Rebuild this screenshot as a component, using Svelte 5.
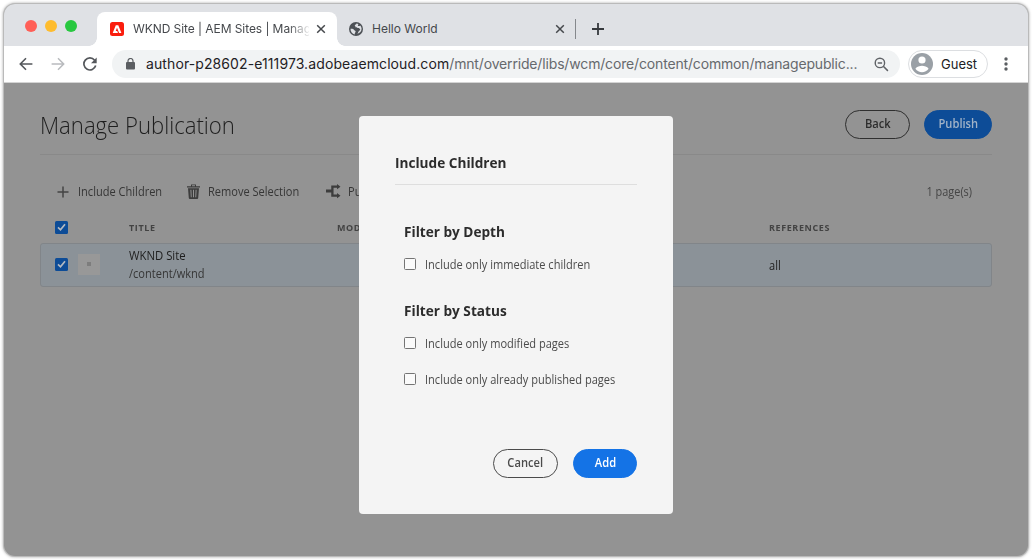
<script>
  let immediate = $state(false);
  let modified = $state(false);
  let published = $state(false);
</script>

{#snippet cross()}
  <svg class="cross" width="10" height="10" viewBox="0 0 10 10"><path d="M1.2 1.2 8.8 8.8M8.8 1.2 1.2 8.8" stroke="#45484c" stroke-width="1.5" fill="none" /></svg>
{/snippet}

{#snippet checked()}
  <svg class="checked" width="13" height="13" viewBox="0 0 13 13"><rect width="13" height="13" rx="1.5" fill="#0d4c97" /><path d="M3 6.4 5.500 8.800 10 3.2" fill="none" stroke="#b4bac1" stroke-width="1.7" /></svg>
{/snippet}

<div class="window">
  <div class="tabs">
    <div class="lights"><i class="red"></i><i class="yellow"></i><i class="green"></i></div>
    <div class="tab active">
      <svg width="14" height="14" viewBox="0 0 14 14"><rect width="14" height="14" rx="2.5" fill="#fa1e0e" /><path d="M2.7 11 5.8 3.3h2.5L11.4 11H9.1L7 5.8 5.7 9h1.5l.8 2z" fill="#fff" /></svg>
      <span class="name fade">WKND Site | AEM Sites | Manag</span>
      {@render cross()}
    </div>
    <div class="tab">
      <svg width="14" height="14" viewBox="0 0 14 14"><circle cx="7" cy="7" r="7" fill="#4d5156" /><path d="M1.5 6.7c1.7-.1 3.2.2 3.7 1.3.4.9 1.6.6 1.4 1.7-.1.8-1 .9-.9 2.7-2.4-.5-4.3-2.8-4.2-5.7zM7.5 1.5c-.2 1.1-1.6 1-1.7 2-.1.8 1 .7.8 1.500-.1.7 1.7.5 2.3 1.1.7.8 2.1.2 2.3 1.1.2.8-.9 1.4-1.6 2.2-.5.6-.4 1.3-1.2 2.3 2.4-.5 4.2-2.3 4.2-4.9 0-1.2-.6-2.5-1.4-3.3-.7.7-2 .9-2.3.1-.2-.5.2-.9.7-1.4-.7-.5-1.4-.7-2.1-.7z" fill="#dfe1e5" /></svg>
      <span class="name">Hello World</span>
      {@render cross()}
    </div>
    <div class="sep"></div>
    <svg class="new" width="12" height="12" viewBox="0 0 12 12"><path d="M6 0v12M0 6h12" stroke="#36393d" stroke-width="1.8" /></svg>
  </div>

  <div class="toolbar">
    <svg class="back" width="14" height="14" viewBox="0 0 14 14"><path d="M13.4 7H1.3M7 1.3 1.3 7 7 12.7" fill="none" stroke="#54575b" stroke-width="1.6" /></svg>
    <svg class="forward" width="14" height="14" viewBox="0 0 14 14"><path d="M.6 7h12.1M7 1.3 12.7 7 7 12.7" fill="none" stroke="#b9bbbe" stroke-width="1.5" /></svg>
    <svg class="reload" width="14" height="14" viewBox="0 0 14 14"><path d="M12.7 8.6A6 6 0 1 1 11.6 3.2" fill="none" stroke="#54575b" stroke-width="1.7" /><path d="M13.7.6v5.7H8z" fill="#54575b" /></svg>
    <div class="address">
      <svg width="9" height="12" viewBox="0 0 9 12"><rect y="4" width="9" height="7.5" rx="1" fill="#5b5e62" /><path d="M2 5V3a2.5 2.5 0 0 1 5 0v2" fill="none" stroke="#5b5e62" stroke-width="1.2" /></svg>
      <span class="url"><b>author-p28602-e111973.adobeaemcloud.com</b>/mnt/override/libs/wcm/core/content/common/managepublic...</span>
      <svg class="zoom" width="15" height="15" viewBox="0 0 15 15"><circle cx="5.9" cy="5.9" r="4.7" fill="none" stroke="#606367" stroke-width="1.4" /><path d="M3.7 5.9h4.4M9.3 9.3l4.6 4.6" stroke="#606367" stroke-width="1.5" /></svg>
    </div>
    <div class="guest">
      <svg width="22" height="22" viewBox="0 0 22 22"><circle cx="11" cy="11" r="11" fill="#9aa0a6" /><circle cx="11" cy="7" r="3.6" fill="#fff" /><path d="M4.4 15.7C5.8 13.7 8.8 12.8 11 12.8s5.2.9 6.6 2.9C16 18 13.600 19.200 11 19.200S6 18 4.400 15.700z" fill="#fff" /></svg>
      <span>Guest</span>
    </div>
    <svg class="dots" width="4" height="14" viewBox="0 0 4 14"><g fill="#5b5e62"><circle cx="2" cy="2" r="1.7" /><circle cx="2" cy="7" r="1.7" /><circle cx="2" cy="12" r="1.700" /></g></svg>
  </div>

  <main>
    <header>
      <h1>Manage Publication</h1>
      <button class="pill outline dim"><span>Back</span></button>
      <button class="pill blue dim"><span>Publish</span></button>
    </header>
    <div class="actions">
      <svg width="12" height="12" viewBox="0 0 12 12"><path d="M6 .5v11M.5 6h11" stroke="#444" stroke-width="1.5" /></svg>
      <span class="narrow a1">Include Children</span>
      <svg width="13" height="15" viewBox="0 0 13 15"><path d="M0 2.200h4V.5h5v1.700h4v1.200H0zM5 1.300v.9h3v-.9zM1 4.200h11L11.200 14q-.1.900-1 .900H2.800q-.9 0-1-.900zM3.400 5.800l.4 7.400h.9l-.3-7.400zM6 5.800v7.400h1V5.800zM8.600 5.800l-.3 7.400h.9l.4-7.400z" fill="#3d3d3d" fill-rule="evenodd" /></svg>
      <span class="narrow a2">Remove Selection</span>
      <svg width="15" height="15" viewBox="0 0 15 15"><path d="M0 5.500h6v3H0z" fill="#3d3d3d" /><path d="M12 2.700H6.400v8.900H12" fill="none" stroke="#3d3d3d" stroke-width="2.300" /><path d="M11 0 14.500 2.700 11 5.300zM11 9l3.500 2.700L11 14.300z" fill="#3d3d3d" /></svg>
      <span class="narrow a3">Publish Later</span>
      <span class="narrow count">1 page(s)</span>
    </div>
    <div class="grid heads">
      {@render checked()}<span></span><span class="head">TITLE</span><span class="head">MODIFIED</span><span class="head">REFERENCES</span>
    </div>
    <div class="grid row">
      {@render checked()}
      <span class="thumb"><i></i></span>
      <div class="title"><strong>WKND Site</strong><span class="narrow">/content/wknd</span></div>
      <span></span>
      <span class="narrow">all</span>
    </div>
  </main>
  <section class="dialog" role="dialog" aria-label="Include Children">
    <h2><span>Include Children</span></h2>
    <div class="filters">
      <h3><span>Filter by Depth</span></h3>
      <label><input type="checkbox" bind:checked={immediate} /><span class="narrow">Include only immediate children</span></label>
      <h3 class="second"><span>Filter by Status</span></h3>
      <label><input type="checkbox" bind:checked={modified} /><span class="narrow">Include only modified pages</span></label>
      <label class="last"><input type="checkbox" bind:checked={published} /><span class="narrow">Include only already published pages</span></label>
    </div>
    <footer><button class="pill outline"><span>Cancel</span></button><button class="pill blue"><span>Add</span></button></footer>
  </section>
</div>

<style>
  :global(body) { background: #fff; }
  * { box-sizing: border-box; }
  svg { display: block; flex: none; }
  .window { position: relative; margin: 4px 4px 0; width: 1024px; height: 552px; border-radius: 11px; overflow: hidden; background: #939393; font-family: "Open Sans", "Noto Sans", sans-serif; display: flex; flex-direction: column; box-shadow: 0 0 0 1px #bababa, 0 0 3px 1px #aaa; }
  :global(#app) { overflow: hidden; height: 560px; }
  .narrow { display: inline-block; transform: scaleX(.921); transform-origin: 0 50%; }
  .tabs { height: 42px; flex: none; background: #dfe1e5; display: flex; font-family: Inter, sans-serif; font-size: 12px; color: #45484c; }
  .lights { display: flex; gap: 8px; padding: 16px 20px 0 21px; width: 93px; }
  .lights i { width: 12px; height: 12px; border-radius: 50%; }
  .red { background: #ff5f57; }
  .yellow { background: #febc2e; }
  .green { background: #28c840; }
  .tab { display: flex; align-items: center; width: 239px; height: 34px; margin-top: 8px; padding: 0 11px 0 12px; }
  .active { position: relative; width: 240px; background: #fff; border-radius: 8px 8px 0 0; padding: 0 11px 0 13px; }
  .active::before, .active::after { content: ""; position: absolute; bottom: 0; width: 8px; height: 8px; }
  .active::before { left: -8px; background: radial-gradient(circle at 0 0, #dfe1e5 7.500px, #fff 8px); }
  .active::after { right: -8px; background: radial-gradient(circle at 100% 0, #dfe1e5 7.500px, #fff 8px); }
  .name { margin-left: 9px; white-space: nowrap; line-height: 18px; }
  .fade { width: 176px; letter-spacing: -.07px; mask-image: linear-gradient(90deg, #000 155px, transparent 178px); }
  .cross { margin-left: auto; }
  .sep { width: 1px; height: 20px; background: #85888c; margin: 15px 0 0 -1px; }
  .new { margin: 19px 0 0 16px; }
  .toolbar { height: 37px; flex: none; background: #fff; display: flex; align-items: center; border-bottom: 1px solid #d4d4d4; font-family: Inter, sans-serif; }
  .back { margin-left: 15px; }
  .forward { margin-left: 18px; }
  .reload { margin-left: 18px; }
  .address { width: 788px; height: 28px; margin-left: 15px; border-radius: 14px; background: #f1f3f4; display: flex; align-items: center; padding: 0 11px 0 14px; }
  .url { margin: -1px 0 0 11px; font-size: 14px; letter-spacing: -.16px; color: #66696d; white-space: nowrap; }
  .url b { font-weight: 400; color: #1f2124; letter-spacing: .1px; }
  .zoom { margin-left: auto; }
  .guest { display: flex; align-items: center; width: 80px; height: 28px; margin-left: 8px; border: 1px solid #dcdee1; border-radius: 14px; padding-left: 2px; font-size: 13px; color: #202124; }
  .guest span { margin-left: 8px; }
  .dots { margin-left: 16px; }
  main { flex: 1; padding: 0 36px; color: #1e1e1e; }
  header { height: 72px; display: flex; align-items: center; padding-top: 11px; border-bottom: 1px solid #898989; }
  h1 { margin: 1px auto 0 0; font-weight: 300; font-size: 24px; line-height: 34px; transform: scaleX(.922); transform-origin: 0 50%; }
  .pill { width: 65px; height: 29px; border-radius: 15px; padding: 0 0 2px; font: 600 12px "Open Sans", sans-serif; border: 1px solid #4b4b4b; color: #4b4b4b; background: transparent; }
  .pill span { display: inline-block; transform: scaleX(.93); }
  .pill.blue { width: 64px; color: #fff; border-color: #1473e6; background: #1473e6; margin-left: 15px; }
  .pill.dim { color: #2c2c2c; border-color: #2f2f2f; padding-bottom: 1px; }
  .pill.dim.blue { width: 68px; margin-left: 14px; color: #a2b3c7; background: #0d4c97; border-color: #0d4c97; }
  .actions { height: 73px; display: flex; align-items: center; padding: 0 20px 0 17px; font-size: 12px; color: #363636; white-space: nowrap; }
  .a1 { margin: 0 26px 0 9px; width: 83px; }
  .a2 { margin: 0 26px 0 8px; width: 92px; }
  .a3 { margin-left: 7px; }
  .count { margin-left: auto; color: #454545; transform: scaleX(.91); transform-origin: 100% 50%; }
  .grid { display: grid; grid-template-columns: 22px 52px 208px 432px 1fr; align-items: center; padding-left: 15px; }
  .heads { font-size: 9.500px; font-weight: 700; color: #434343; letter-spacing: .65px; height: 14px; margin-bottom: 9px; margin-top: -8px; }
  .head { transform: scaleX(.945); transform-origin: 0 50%; }
  .row { height: 44px; background: #8b9298; border: 1px solid #818589; border-radius: 3px; padding-left: 14px; font-size: 12px; }
  .row .checked { margin-top: -1px; }
  .thumb { width: 22px; height: 21px; margin-top: -2px; background: #989898; display: grid; place-items: center; margin-left: 1px; }
  .thumb i { width: 4px; height: 4px; background: #7d7d7d; }
  .title { display: flex; flex-direction: column; line-height: 18px; margin-top: -1px; }
  .title strong { font-weight: 400; color: #1e1e1e; transform: scaleX(.945); transform-origin: 0 50%; }
  .title span { color: #363636; }
  .dialog { position: absolute; left: 355px; top: 112px; width: 314px; height: 398px; border-radius: 4px; background: #f4f4f4; padding: 34px 36px 36px; display: flex; flex-direction: column; color: #2c2c2c; }
  h2, h3 { margin: 0; font-size: 15px; font-weight: 700; line-height: 24px; }
  h2 span, h3 span { display: inline-block; transform: scaleX(.908); transform-origin: 0 50%; }
  h2 { height: 35px; border-bottom: 1px solid #dedede; }
  .filters { padding: 34px 0 0 9px; }
  label { display: flex; align-items: center; height: 18px; margin-top: 12px; font-size: 12px; color: #4b4b4b; white-space: nowrap; }
  .second { margin-top: 25px; }
  .last { margin-top: 18px; }
  input { appearance: none; width: 12px; height: 12px; margin: -1px 9px 0 0; border: 1px solid #747474; border-radius: 1.500px; background: #fafafa; }
  input:checked { background: #1473e6; }
  footer { margin-top: auto; display: flex; justify-content: flex-end; }
</style>
